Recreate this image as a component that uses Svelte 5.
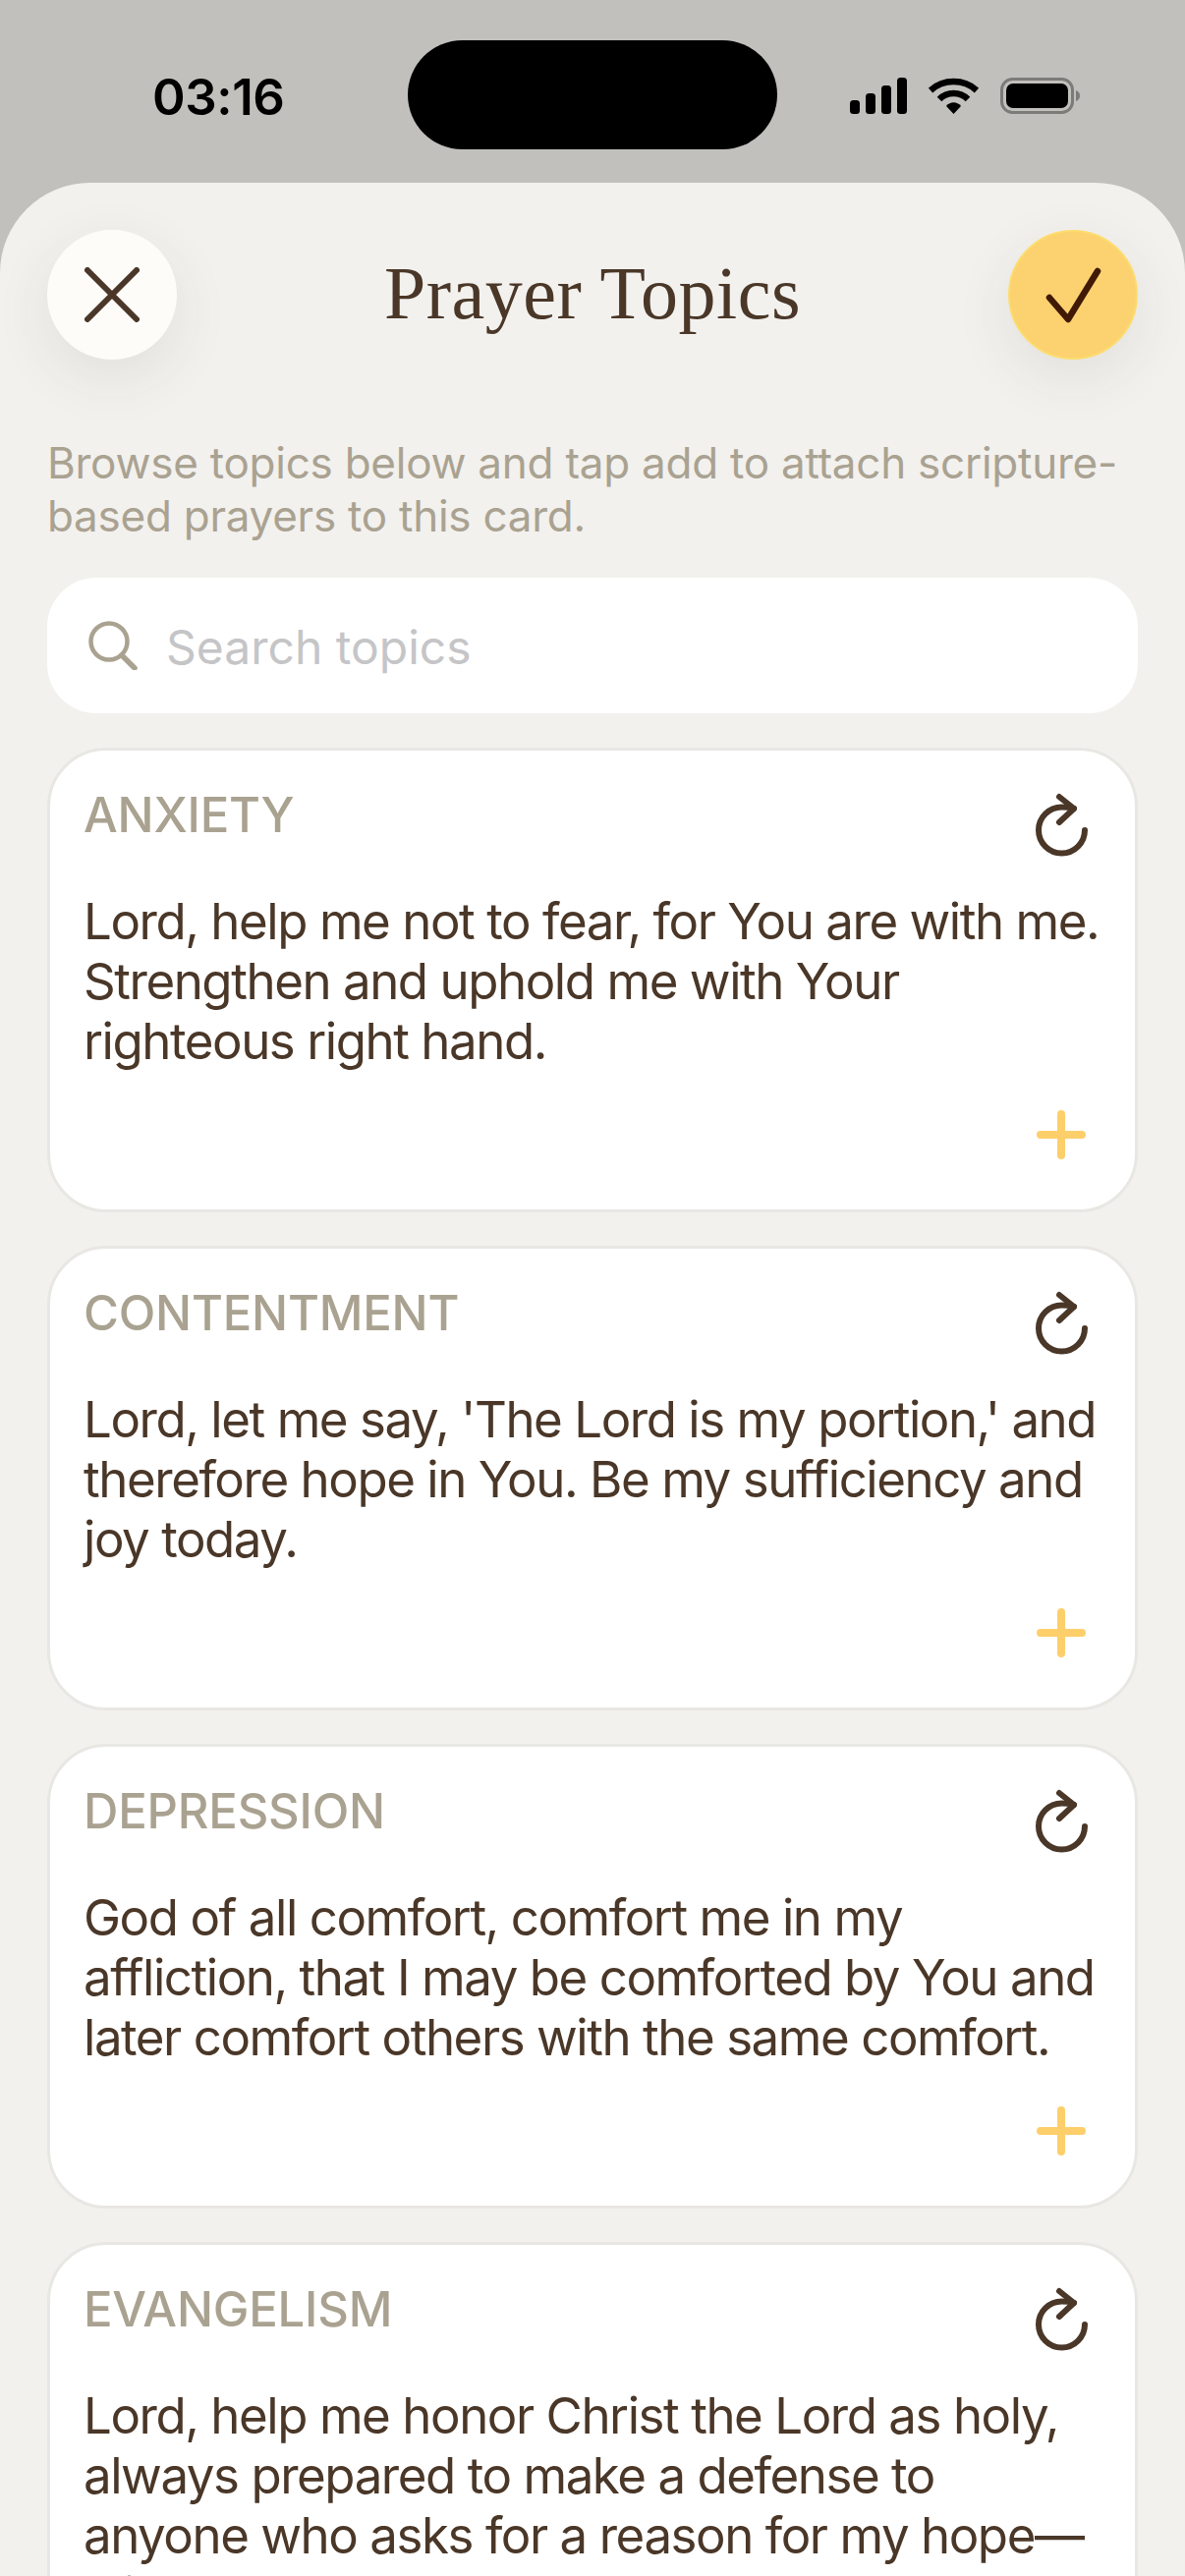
<script>
  const topics = [
    {
      title: 'ANXIETY',
      text: 'Lord, help me not to fear, for You are with me. Strengthen and uphold me with Your righteous right hand.'
    },
    {
      title: 'CONTENTMENT',
      text: "Lord, let me say, 'The Lord is my portion,' and therefore hope in You. Be my sufficiency and joy today."
    },
    {
      title: 'DEPRESSION',
      text: 'God of all comfort, comfort me in my affliction, that I may be comforted by You and later comfort others with the same comfort.'
    },
    {
      title: 'EVANGELISM',
      text: 'Lord, help me honor Christ the Lord as holy, always prepared to make a defense to anyone who asks for a reason for my hope—with gentleness and respect.'
    }
  ];
</script>

<div class="screen">
  <div class="status">
    <span class="time">03:16</span>
    <div class="island"></div>
    <div class="indicators">
      <svg width="58" height="37" viewBox="0 0 58 37" fill="#000">
        <rect x="0" y="23" width="10" height="14" rx="3.5" />
        <rect x="16" y="16" width="10" height="21" rx="3.5" />
        <rect x="32" y="8" width="10" height="29" rx="3.5" />
        <rect x="48" y="0" width="10" height="37" rx="3.5" />
      </svg>
      <svg width="51" height="37" viewBox="0 0 51 37">
        <path d="M2 13 C15 1 36 1 49 13" fill="none" stroke="#000" stroke-width="6.5" stroke-linejoin="round" />
        <path d="M11 22 C19 14 32 14 40 22" fill="none" stroke="#000" stroke-width="6.5" />
        <path d="M18 29 C22 24 29 24 33 29 L25.5 37 Z" fill="#000" />
      </svg>
      <svg width="82" height="37" viewBox="0 0 82 37">
        <rect x="1.5" y="1.5" width="72" height="34" rx="11" fill="none" stroke="#7b7b79" stroke-width="3" />
        <rect x="6" y="6" width="63" height="25" rx="7" fill="#000" />
        <path d="M77 13 C80 14 81 16 81 18.500 C81 21 80 23 77 24 Z" fill="#7b7b79" />
      </svg>
    </div>
  </div>

  <div class="sheet">
    <header class="head">
      <button class="round close" aria-label="Close">
        <svg width="56" height="56" viewBox="0 0 56 56" fill="none" stroke="#4a3728" stroke-width="6" stroke-linecap="round">
          <path d="M3 3 L53 53 M53 3 L3 53" />
        </svg>
      </button>
      <h1>Prayer Topics</h1>
      <button class="round done" aria-label="Done">
        <svg width="60" height="60" viewBox="0 0 60 60" fill="none" stroke="#401a05" stroke-width="6.500" stroke-linecap="round" stroke-linejoin="round">
          <path d="M6 33 L25 55 L55 6" />
        </svg>
      </button>
    </header>

    <p class="hint">Browse topics below and tap add to attach scripture-based prayers to this card.</p>

    <div class="search">
      <svg width="50" height="50" viewBox="0 0 50 50" fill="none" stroke="#aaa291" stroke-width="4.500" stroke-linecap="round">
        <circle cx="21" cy="21" r="18.500" />
        <path d="M34 35 L47 48" stroke-width="5.500" />
      </svg>
      <span>Search topics</span>
    </div>

    <div class="list">
      {#each topics as topic}
        <section class="card">
          <div class="card-top">
            <h2>{topic.title}</h2>
            <svg class="again" width="58" height="66" viewBox="0 0 58 66" fill="none" stroke="#4a3728" stroke-width="6" stroke-linecap="round" stroke-linejoin="round">
              <path d="M53 38 A23.500 23.500 0 1 1 29.500 14.500 C33 14.500 38 15 42 16" />
              <path d="M27 4 L42 16 L27 30" />
            </svg>
          </div>
          <p>{topic.text}</p>
          <div class="add">
            <svg width="50" height="50" viewBox="0 0 50 50" fill="none" stroke="#fdcf6b" stroke-width="8" stroke-linecap="round">
              <path d="M25 4 V46 M4 25 H46" />
            </svg>
          </div>
        </section>
      {/each}
    </div>
  </div>
</div>

<style>
  :global(body) {
    margin: 0;
    background: #f2f1ee;
  }

  .screen {
    width: 1206px;
    height: 2622px;
    overflow: hidden;
    background: #c1c0bc;
    font-family: Inter, "Liberation Sans", sans-serif;
  }

  .status {
    height: 186px;
    display: grid;
    grid-template-columns: 415px 376px 1fr;
    box-sizing: border-box;
    padding-top: 41px;
  }

  .time {
    padding: 30px 0 0 155px;
    font-size: 51px;
    line-height: 56px;
    font-weight: 600;
    letter-spacing: -0.4px;
    color: #000;
  }

  .island {
    height: 111px;
    border-radius: 56px;
    background: #000;
  }

  .indicators {
    display: flex;
    align-items: flex-start;
    gap: 22px;
    padding: 38px 0 0 74px;
  }

  .sheet {
    height: 2436px;
    box-sizing: border-box;
    padding: 48px 48px 0;
    background: #f2f1ee;
    border-radius: 92px 92px 0 0;
  }

  .head {
    display: flex;
    align-items: center;
    justify-content: space-between;
  }

  .round {
    width: 132px;
    height: 132px;
    padding: 0;
    border: none;
    border-radius: 50%;
    display: flex;
    align-items: center;
    justify-content: center;
    box-shadow: 0 18px 60px rgba(60, 50, 30, 0.09);
  }

  .close {
    background: #fdfcf9;
  }

  .done {
    background: #fbd26f;
    border: 2px solid #fddc6e;
    box-sizing: border-box;
  }

  h1 {
    margin: 0;
    padding-bottom: 5px;
    font-family: "Liberation Serif", serif;
    font-weight: 400;
    font-size: 76px;
    line-height: 80px;
    letter-spacing: 0.5px;
    color: #4a3728;
  }

  .hint {
    margin: 78px 0 0;
    font-size: 44px;
    line-height: 54px;
    letter-spacing: -0.25px;
    color: #aaa291;
  }

  .search {
    height: 138px;
    margin-top: 36px;
    box-sizing: border-box;
    padding: 0 42px;
    display: flex;
    align-items: center;
    gap: 29px;
    background: #fff;
    border-radius: 50px;
    font-size: 48px;
    color: #c5c5c7;
  }

  .search span {
    padding-top: 2px;
  }

  .list {
    margin-top: 35px;
    display: flex;
    flex-direction: column;
    gap: 34px;
  }

  .card {
    height: 473px;
    flex: none;
    box-sizing: border-box;
    padding: 37px 34px 0 34px;
    background: #fff;
    border: 3px solid #e8e7e3;
    border-radius: 60px;
  }

  .card-top {
    display: flex;
    justify-content: space-between;
    align-items: flex-start;
    height: 106px;
  }

  h2 {
    margin: 0;
    font-size: 49px;
    line-height: 58px;
    font-weight: 500;
    letter-spacing: -0.2px;
    color: #aaa291;
  }

  .again {
    margin: 6px 12px 0 0;
  }

  .card p {
    margin: 0;
    font-size: 51px;
    line-height: 61px;
    letter-spacing: -1.45px;
    color: #4a3728;
  }

  .add {
    display: flex;
    justify-content: flex-end;
    padding: 40px 16px 0 0;
  }
</style>
